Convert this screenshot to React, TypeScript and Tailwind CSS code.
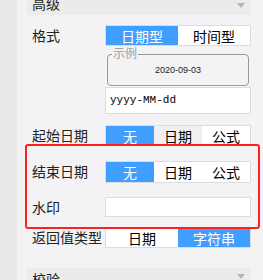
const cjk = "font-['Noto_Sans_CJK_SC','Noto_Sans',sans-serif]";

function Seg({ items, active, hover }: { items: string[]; active: number; hover?: number }) {
  return (
    <div className="flex h-full w-full border border-[#dcdcdc] bg-white">
      {items.map((it, i) => (
        <div
          key={it}
          className={
            "flex flex-1 items-center justify-center text-[14px] leading-none " +
            (i === active
              ? "bg-[#409eff] text-white"
              : i === hover
                ? "bg-[#f0f0f2] text-black"
                : "bg-white text-black")
          }
        >
          {it}
        </div>
      ))}
    </div>
  );
}

function Label({ text }: { text: string }) {
  return <div className="w-[78px] shrink-0 pl-[5px] pt-[1px] text-[14px] leading-[18px] text-[#222]">{text}</div>;
}

function Arrow() {
  return (
    <svg width="8" height="5" viewBox="0 0 8 5" className="mr-[6px]">
      <path d="M0 0h8L4 5z" fill="#b5b5b5" />
    </svg>
  );
}

export default function App() {
  return (
    <div className={"relative flex h-[280px] w-[263px] overflow-hidden bg-[#f3f3f5] " + cjk}>
      <div className="w-[17px] shrink-0 bg-[#e8e8e8]" />
      <div className="box-content flex w-[224px] flex-col pl-[10px]">
        <div className="flex h-[15px] shrink-0 items-start justify-between overflow-hidden bg-[#ebebeb]">
          <span className="relative top-[-5px] pl-[5px] text-[14px] leading-[16px] text-[#222]">高级</span>
          <div className="mt-[3px]">
            <Arrow />
          </div>
        </div>

        <div className="mt-[10px] flex h-[21px] shrink-0">
          <Label text="格式" />
          <Seg items={["日期型", "时间型"]} active={0} />
        </div>

        <div className="ml-[78px] mt-[3px] flex shrink-0 flex-col">
          <div className="relative mx-[2px] mt-[5px] flex h-[32px] items-center justify-center rounded-[4px] border border-[#9a9a9a]">
            <span className="absolute left-[4px] top-[-9px] bg-[#f3f3f5] px-[1px] text-[12px] leading-[14px] text-[#a0a0a0]">
              示例
            </span>
            <span className="mt-[2px] font-['Liberation_Sans',sans-serif] text-[9px] text-[#222]">2020-09-03</span>
          </div>
          <div className="mt-[1px] flex h-[27px] items-center border border-[#dcdcdc] bg-white pl-[4px] font-['Liberation_Mono',monospace] text-[11px] text-black">
            yyyy-MM-dd
          </div>
        </div>

        <div className="mt-[11px] flex h-[21px] shrink-0">
          <Label text="起始日期" />
          <Seg items={["无", "日期", "公式"]} active={0} hover={1} />
        </div>

        <div className="mt-[15px] flex h-[22px] shrink-0">
          <Label text="结束日期" />
          <Seg items={["无", "日期", "公式"]} active={0} />
        </div>

        <div className="mt-[14px] flex h-[20px] shrink-0">
          <Label text="水印" />
          <div className="w-full border border-[#dcdcdc] bg-white" />
        </div>

        <div className="mt-[10px] flex h-[21px] shrink-0">
          <Label text="返回值类型" />
          <Seg items={["日期", "字符串"]} active={1} />
        </div>

        <div className="mt-[20px] flex h-[20px] shrink-0 items-start justify-between bg-[#ebebeb]">
          <span className="pl-[5px] pt-[3px] text-[14px] leading-[16px] text-[#222]">校验</span>
          <div className="mt-[6px]">
            <Arrow />
          </div>
        </div>
      </div>

      <div className="absolute left-[25px] top-[144px] h-[85px] w-[235px] rounded-[3px] border-2 border-[#ff2020]" />
    </div>
  );
}
